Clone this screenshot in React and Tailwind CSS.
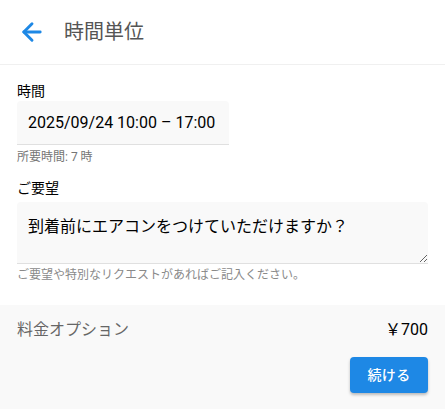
import React from 'react';
import { ArrowLeft } from 'lucide-react';

export default function App() {
    return (
        <div className="w-[445px] h-[409px] bg-white flex flex-col font-['Roboto','Noto_Sans_CJK_JP',sans-serif]">
            <header className="h-[65px] flex items-center border-b border-[#f0f0f0] shrink-0">
                <ArrowLeft className="w-7 h-7 ml-[18px] text-[#1e88e5]" strokeWidth={2.5} />
                <h1 className="ml-[18px] text-xl text-[#555]">時間単位</h1>
            </header>

            <main className="px-[17px] pt-4 flex-1">
                <label className="block text-sm leading-5 text-black">時間</label>
                <div className="w-[212px] h-[44px] bg-[#f9f9f9] rounded-t-[4px] border-b border-[#e0e0e0] flex items-center pl-[11px] text-base text-black">
                    2025/09/24 10:00 – 17:00
                </div>
                <p className="mt-[4px] text-xs leading-4 text-[#757575]">所要時間: 7 時</p>

                <label className="block mt-[13px] text-sm leading-5 text-black">ご要望</label>
                <textarea
                    className="mt-[4px] block w-full h-[62px] bg-[#f9f9f9] rounded-t-[4px] border-b border-[#e0e0e0] pl-[11px] pt-[13px] text-base leading-6 text-black outline-none"
                    defaultValue="到着前にエアコンをつけていただけますか？"
                />
                <p className="mt-[3px] text-xs leading-4 text-[#8a8a8a]">ご要望や特別なリクエストがあればご記入ください。</p>
            </main>

            <footer className="h-[104px] bg-[#f9f9f9] px-[17px] pt-[13px] shrink-0">
                <div className="flex items-center justify-between">
                    <span className="text-base text-[#666]">料金オプション</span>
                    <span className="text-base text-black">￥700</span>
                </div>
                <div className="flex justify-end mt-[15px]">
                    <button className="w-[78px] h-[36px] bg-[#1e88e5] text-white text-sm font-medium rounded-[4px] shadow-[0_2px_3px_rgba(0,0,0,0.25)] tracking-wide">
                        続ける
                    </button>
                </div>
            </footer>
        </div>
    );
}
